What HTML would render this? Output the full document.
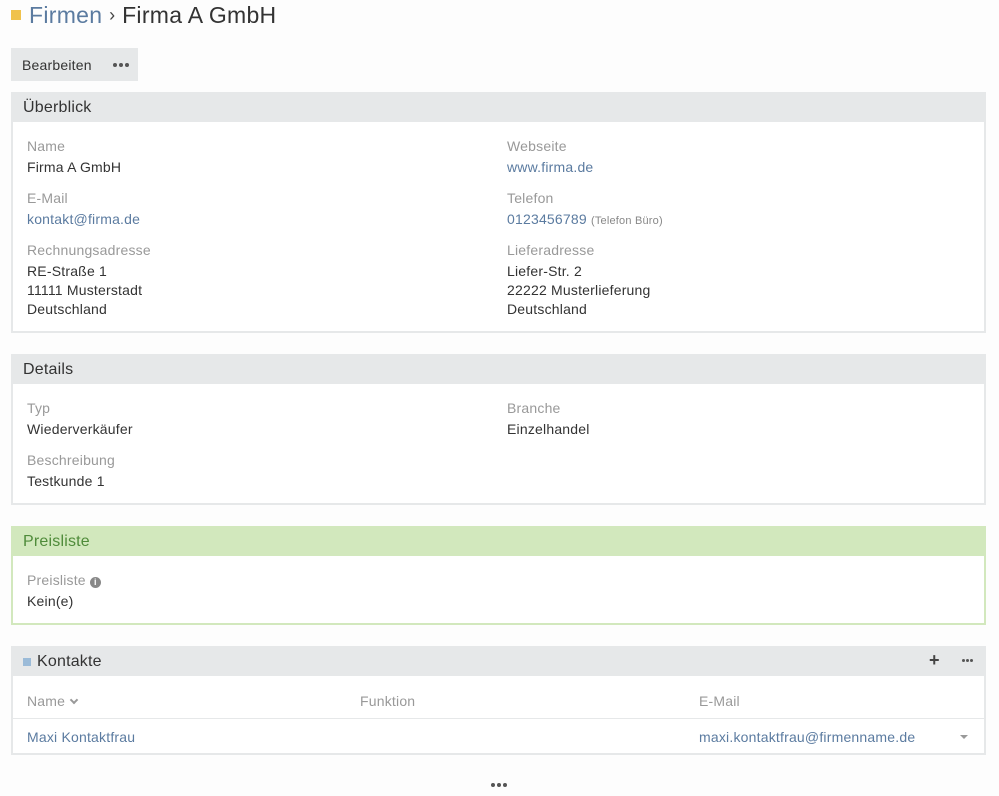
<!DOCTYPE html>
<html><head><meta charset="utf-8"><style>
*{margin:0;padding:0;box-sizing:border-box}
body{width:999px;height:796px;background:#fdfdfd;font-family:"Liberation Sans",sans-serif;font-size:14px;color:#333;position:relative;overflow:hidden;letter-spacing:0.2px}
.a{position:absolute;white-space:nowrap}
.lbl{color:#999}
.lnk{color:#5b7ba0}
.panel{position:absolute;left:11px;width:975px;background:#fff;border:2px solid #e6e8e9;border-top:none}
.ph{position:absolute;left:11px;width:975px;height:30px;background:#e6e8e9;font-size:16px;color:#333;padding:7px 0 0 12px}
.dots{position:absolute;display:flex;gap:2px}
.dots i{display:block;width:4px;height:4px;border-radius:50%;background:#555}
</style></head><body>
<div class="a" style="left:11px;top:10px;width:10px;height:10px;background:#f0c24c"></div>
<div class="a" style="left:29px;top:2px;font-size:23px;color:#5b7ba0;letter-spacing:0.3px">Firmen <span style="color:#444;font-size:18px;position:relative;top:-2px">›</span> <span style="color:#333">Firma A GmbH</span></div>
<div class="a" style="left:11px;top:48px;width:127px;height:33px;background:#e6e8e9"></div>
<div class="a" style="left:22px;top:57px">Bearbeiten</div>
<div class="dots" style="left:113px;top:63px"><i></i><i></i><i></i></div>

<div class="panel" style="top:92px;height:241px"></div>
<div class="ph" style="top:92px">Überblick</div>
<div class="a lbl" style="left:27px;top:138px">Name</div>
<div class="a" style="left:27px;top:159px">Firma A GmbH</div>
<div class="a lbl" style="left:27px;top:190px">E-Mail</div>
<div class="a lnk" style="left:27px;top:211px">kontakt@firma.de</div>
<div class="a lbl" style="left:27px;top:242px">Rechnungsadresse</div>
<div class="a" style="left:27px;top:262px;line-height:19px">RE-Straße 1<br>11111 Musterstadt<br>Deutschland</div>
<div class="a lbl" style="left:507px;top:138px">Webseite</div>
<div class="a lnk" style="left:507px;top:159px">www.firma.de</div>
<div class="a lbl" style="left:507px;top:190px">Telefon</div>
<div class="a lnk" style="left:507px;top:211px">0123456789 <span style="color:#888;font-size:11px">(Telefon Büro)</span></div>
<div class="a lbl" style="left:507px;top:242px">Lieferadresse</div>
<div class="a" style="left:507px;top:262px;line-height:19px">Liefer-Str. 2<br>22222 Musterlieferung<br>Deutschland</div>

<div class="panel" style="top:354px;height:151px"></div>
<div class="ph" style="top:354px">Details</div>
<div class="a lbl" style="left:27px;top:400px">Typ</div>
<div class="a" style="left:27px;top:421px">Wiederverkäufer</div>
<div class="a lbl" style="left:27px;top:452px">Beschreibung</div>
<div class="a" style="left:27px;top:473px">Testkunde 1</div>
<div class="a lbl" style="left:507px;top:400px">Branche</div>
<div class="a" style="left:507px;top:421px">Einzelhandel</div>

<div class="panel" style="top:526px;height:99px;border-color:#d2e8bd"></div>
<div class="ph" style="top:526px;background:#d2e8bd;color:#4f8b3a">Preisliste</div>
<div class="a lbl" style="left:27px;top:572px">Preisliste <span style="display:inline-block;width:11px;height:11px;border-radius:50%;background:#888;color:#fff;font-size:9px;text-align:center;line-height:11px;font-weight:bold">i</span></div>
<div class="a" style="left:27px;top:593px">Kein(e)</div>

<div class="panel" style="top:646px;height:109px"></div>
<div class="ph" style="top:646px;padding-left:26px">Kontakte</div>
<div class="a" style="left:23px;top:658px;width:8px;height:8px;background:#9bbbd8"></div>
<div class="a" style="left:929px;top:650px;font-size:18px;font-weight:bold;color:#444">+</div>
<div class="dots" style="left:962px;top:659px;gap:1px"><i style="width:3px;height:3px"></i><i style="width:3px;height:3px"></i><i style="width:3px;height:3px"></i></div>
<div class="a lbl" style="left:27px;top:693px">Name</div>
<div class="a" style="left:71px;top:697px;width:6px;height:6px;border-right:2px solid #999;border-bottom:2px solid #999;transform:rotate(45deg)"></div>
<div class="a lbl" style="left:360px;top:693px">Funktion</div>
<div class="a lbl" style="left:699px;top:693px">E-Mail</div>
<div class="a" style="left:13px;top:718px;width:971px;height:1px;background:#e6e8e9"></div>
<div class="a lnk" style="left:27px;top:729px">Maxi Kontaktfrau</div>
<div class="a lnk" style="left:699px;top:729px">maxi.kontaktfrau@firmenname.de</div>
<div class="a" style="left:960px;top:735px;border-left:4px solid transparent;border-right:4px solid transparent;border-top:4px solid #999"></div>
<div class="dots" style="left:491px;top:783px"><i></i><i></i><i></i></div>
</body></html>
